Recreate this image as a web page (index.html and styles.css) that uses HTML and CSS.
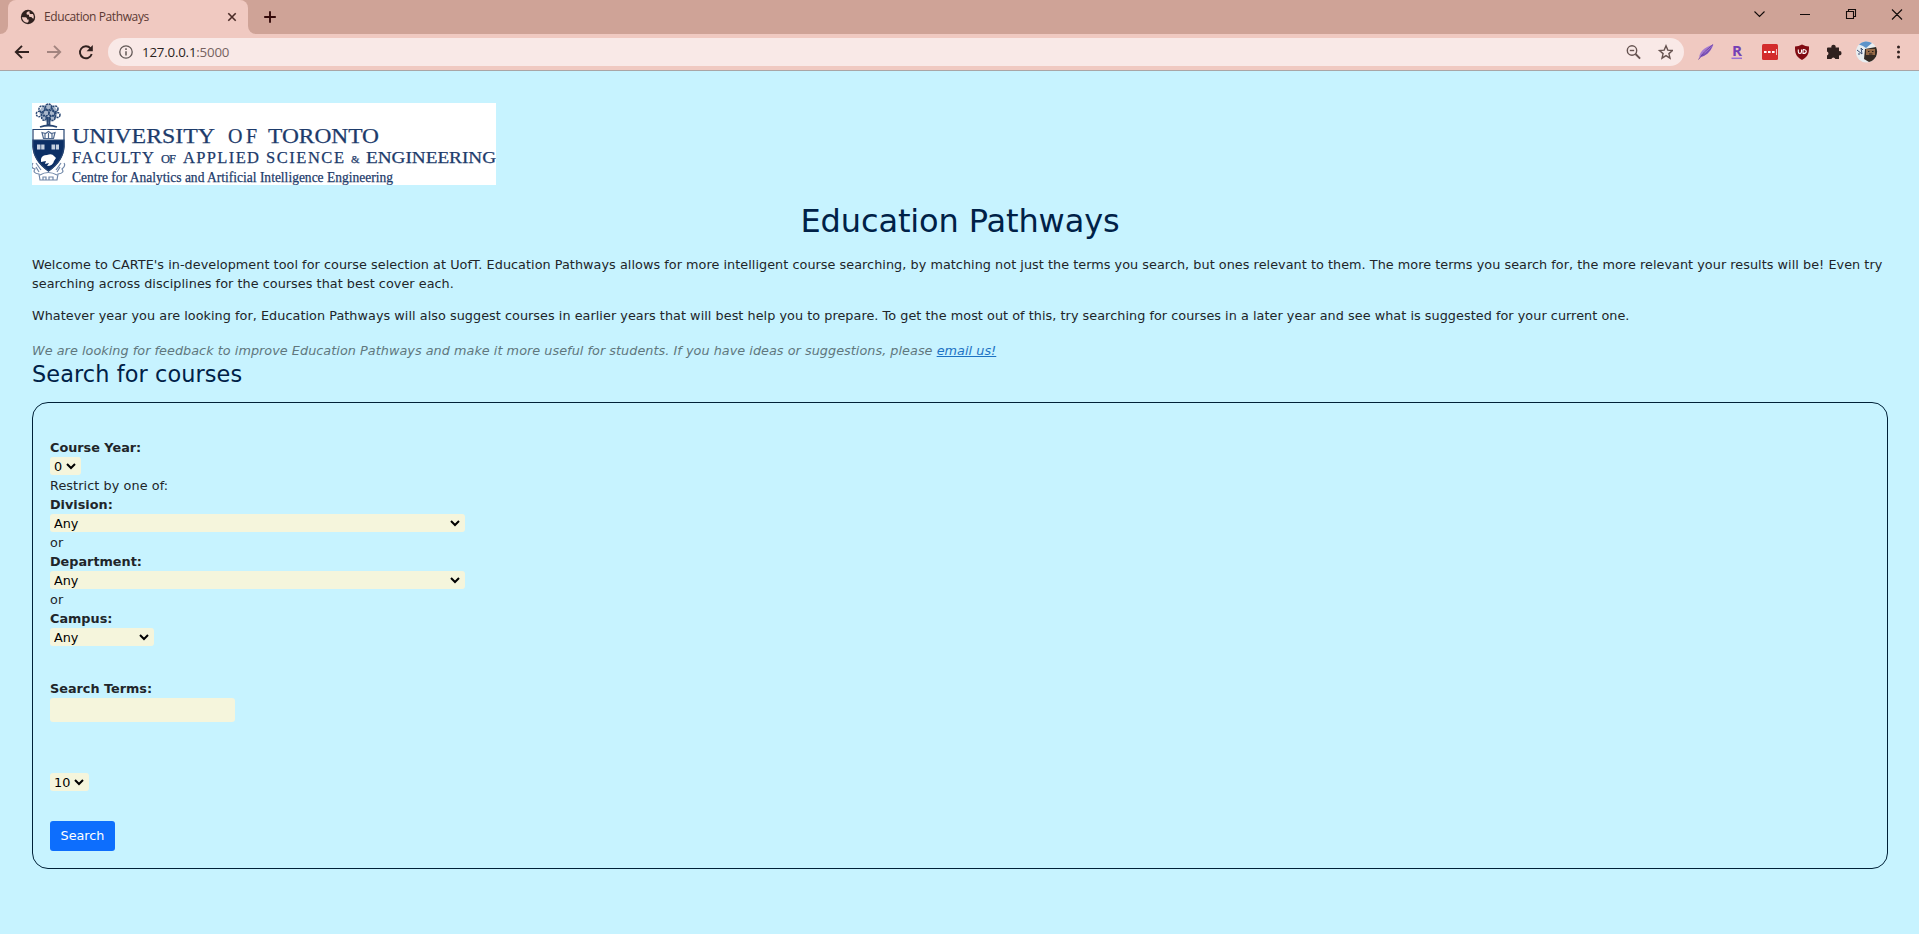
FILE: index.html
```html
<!DOCTYPE html>
<html lang="en">
<head>
<meta charset="utf-8">
<title>Education Pathways</title>
<link rel="stylesheet" href="styles.css">
</head>
<body>
<header class="browser">
  <div class="tabstrip">
    <div class="left-edge"></div>
    <div class="tab">
      <svg class="globe" width="16" height="16" viewBox="0 0 16 16"><circle cx="8" cy="8" r="7.200" fill="#30211f"/><path d="M1.800 8.200h3.700q1.600 0 1.600 1.500v.9h1.500v1.700q0 .9-1.200 1.400-4.600-.5-5.600-5.500zM9.500 2.300q-3 .2-3 2.200 0 1.300 1.500 1.300h1v1.300q0 1 1.300 1h1.200q.3 1.600 2.200 1.300.5-2.700-.8-4.500h-2.200q-1.200 0-1.200-1.200z" fill="#f0c9c1"/></svg>
      <span class="tab-title">Education Pathways</span>
      <svg class="close" width="10" height="10" viewBox="0 0 10 10"><path d="M1.300 1.300l7.400 7.400M8.700 1.300L1.300 8.700" stroke="#4a2b27" stroke-width="1.600"/></svg>
    </div>
    <div class="right-edge"></div>
    <svg class="plus" width="12" height="12" viewBox="0 0 12 12"><path d="M6 .2v11.600M.2 6h11.600" stroke="#340a0a" stroke-width="1.900"/></svg>
    <svg class="window-buttons" width="150" height="34" viewBox="0 0 150 34" fill="none" stroke="#130b0a" stroke-width="1.100"><path d="M4.500 11.500l5 5 5-5M50 14.500h10M96.500 11.500h7v7h-7zM98.500 11v-1.500h7v7H104M142 9.500l10 10M152 9.500l-10 10"/></svg>
  </div>
  <div class="toolbar">
    <svg class="nav" width="94" height="36" viewBox="0 0 94 36" fill="none" stroke-width="1.900"><path d="M29 18H16.500M22 11.800L15.800 18l6.200 6.200" stroke="#30211f"/><path d="M47 18h12.500M54 11.800l6.200 6.200-6.200 6.200" stroke="#a2847f"/><path d="M90.500 14.300A6 6 0 1 0 91.700 20" stroke="#30211f"/><path d="M92.800 11v6.200h-6.200z" fill="#30211f"/></svg>
    <div class="address">
      <svg width="14" height="14" viewBox="0 0 14 14"><circle cx="7" cy="7" r="6.200" fill="none" stroke="#625856" stroke-width="1.300"/><path d="M7 6.200v4.300M7 3.200v1.700" stroke="#625856" stroke-width="1.500"/></svg>
      <span class="url">127.0.0.1<span class="port">:5000</span></span>
      <svg class="address-icons" width="50" height="28" viewBox="0 0 50 28" fill="none" stroke="#665350" stroke-width="1.400"><circle cx="9" cy="12.500" r="4.700"/><path d="M6.800 12.500h4.400"/><path d="M12.500 16l4.600 4.600" stroke-width="1.900"/><path d="M43 7.800l1.800 4.300 4.700.4-3.600 3.100 1.100 4.600-4-2.500-4 2.500 1.100-4.600-3.600-3.100 4.700-.4z"/></svg>
    </div>
    <svg class="extensions" width="234" height="36" viewBox="0 0 234 36">
      <path d="M14.500 24C13.500 19 19 13 28.500 10.500 26.500 17 21 22 15 23.500z" fill="#a57bd0"/><path d="M16 21q5-2 8.500-6l3-3.500q-1.500 5-5 8-3 2.500-6.500 3z" fill="#7950b4"/><path d="M13.500 25.500Q18 18 28 10.500" stroke="#6b41a1" stroke-width=".9" fill="none"/>
      <text class="letter-r" x="47" y="22" textLength="10" lengthAdjust="spacingAndGlyphs">R</text><path d="M46.500 24.300h10.500" stroke="#9b70d4" stroke-width="1.500"/>
      <rect x="77" y="10" width="16" height="16" rx="1.500" fill="#d32b2b"/><path d="M79 17h2.600v2H79zM83 17h2.600v2H83zM87 17h2.600v2H87zM91 15h.7v6H91z" fill="#fff"/>
      <path d="M117 10.500Q113.500 12.300 110 12.500C110 18 110 22 117 26 124 22 124 18 124 12.500Q120.500 12.300 117 10.500z" fill="#800b12"/><path d="M113.300 15.500v2.300q0 1.700 1.600 1.700t1.600-1.700v-2.300M118 15.500v4q3.300 0 3.300-2t-3.300-2" fill="none" stroke="#fff" stroke-width="1.100"/>
      <path d="M143 13.500h3.400a2.200 2.200 0 1 1 4.200 0h3.400v3.700a2.100 2.100 0 1 1 0 4.100V25h-3.700a2 2 0 0 0-3.900 0H142v-3.600a2.100 2.100 0 0 0 0-4v-3q0-.9 1-.9z" fill="#30211f"/>
      <g><circle cx="181.500" cy="18" r="10.600" fill="#e8edf0"/><path d="M174 10.500A10.600 10.600 0 0 1 187 9l-6 5-3-2z" fill="#5d93c9"/><path d="M180 15l11-2a10.600 10.600 0 0 1-7 15l-5-3z" fill="#332a23"/><path d="M181 15h9v6h-9z" fill="#966b48"/><path d="M183 17.500h1.500M187 17.500h1.500M184 20h3.500" stroke="#2a211d"/><path d="M172 16l5 4-1-6 2 2M173 20h2" fill="none" stroke="#394d71"/></g>
      <g fill="#30211f"><circle cx="213.500" cy="13" r="1.500"/><circle cx="213.500" cy="18" r="1.500"/><circle cx="213.500" cy="23" r="1.500"/></g>
    </svg>
  </div>
</header>
<main class="page">
  <svg class="logo" width="464" height="82" viewBox="0 0 464 82">
    <rect width="464" height="82" fill="#fff"/>
    <g fill="none" stroke="#274673" stroke-width="1.200">
      <circle cx="16.500" cy="10" r="9" fill="#a9b7cb" stroke="none"/>
      <g stroke-width="1.500" stroke-dasharray="2 .8"><circle cx="16.500" cy="4" r="3"/><circle cx="10" cy="6" r="3"/><circle cx="23" cy="6" r="3"/><circle cx="7" cy="11" r="2.700"/><circle cx="14" cy="10" r="3"/><circle cx="20" cy="10" r="3"/><circle cx="25.500" cy="12" r="2.500"/><circle cx="12" cy="15" r="2.300"/><circle cx="20.500" cy="15" r="2.500"/></g>
      <path d="M15.500 14v8M17.500 14v8M8 24q8.500-3 17 0" stroke-width="1.800"/>
      <path d="M1 26.500h31v17Q31 58 16.500 68 2 58 1 43.500z" fill="#fff"/>
      <path d="M1 37h31v7Q31 58 16.500 68 2 58 1 44z" fill="#0c2f65"/>
      <path d="M11.500 35.500h10l1.500-6-3.500 1-3-2-3 2-3.500-1zM13 31v4M16.500 30v5M20 31v4" stroke="#50698e"/>
      <path d="M5 41.500h3.500v5H5zM9.200 41.500h3.300v5H9.200zM19.500 41.500H23v5h-3.500zM23.800 41.500H27v5h-3.200z" fill="#c5d0df" stroke="none"/>
      <path d="M9 56q1-4 6-4 5-2 7 1l2 2-2 3q-1 5-7 5l2-3-4 1 1-3-5 1z" fill="#fff" stroke="none"/>
      <path d="M1 60q-3 5 2 6-3 4 4 5l1 6h17l1-6q7-1 4-5 4-3 2-6M4 60l5 7M29 60l-5 7M8 72q8-5 17 0M11 77v-3h3v3M17 77v-3h4v3M4 64l3 5M28 64l-3 5" stroke="#7188a9"/>
    </g>
    <g class="logo-text">
      <text x="40" y="40" font-size="20" textLength="143" lengthAdjust="spacingAndGlyphs">UNIVERSITY</text>
      <text x="196" y="40" font-size="20" textLength="29">OF</text>
      <text x="236" y="40" font-size="20" textLength="111" lengthAdjust="spacingAndGlyphs">TORONTO</text>
      <text x="40" y="59.500" font-size="16.500" textLength="82">FACULTY</text>
      <text x="129" y="59.500" font-size="12.500" textLength="15">OF</text>
      <text x="151" y="59.500" font-size="16.500" textLength="76">APPLIED</text>
      <text x="234" y="59.500" font-size="16.500" textLength="78">SCIENCE</text>
      <text x="319" y="59.500" font-size="11">&amp;</text>
      <text x="334" y="59.500" font-size="16.500" textLength="130" lengthAdjust="spacingAndGlyphs">ENGINEERING</text>
      <text x="40" y="78.500" font-size="14.500" textLength="321" lengthAdjust="spacingAndGlyphs">Centre for Analytics and Artificial Intelligence Engineering</text>
    </g>
  </svg>
  <h1 class="title">Education Pathways</h1>
  <p class="intro">Welcome to CARTE's in-development tool for course selection at UofT. Education Pathways allows for more intelligent course searching, by matching not just the terms you search, but ones relevant to them. The more terms you search for, the more relevant your results will be! Even try searching across disciplines for the courses that best cover each.</p>
  <p class="intro">Whatever year you are looking for, Education Pathways will also suggest courses in earlier years that will best help you to prepare. To get the most out of this, try searching for courses in a later year and see what is suggested for your current one.</p>
  <p class="feedback">We are looking for feedback to improve Education Pathways and make it more useful for students. If you have ideas or suggestions, please <a class="mail" href="#">email us!</a></p>
  <h2 class="subtitle">Search for courses</h2>
  <form class="search-form">
    <label class="name" for="year">Course Year:</label>
    <select class="pick year" id="year"><option>0</option></select>
    <span class="line">Restrict by one of:</span>
    <label class="name" for="division">Division:</label>
    <select class="pick wide" id="division"><option>Any</option></select>
    <span class="line">or</span>
    <label class="name" for="department">Department:</label>
    <select class="pick wide" id="department"><option>Any</option></select>
    <span class="line">or</span>
    <label class="name" for="campus">Campus:</label>
    <select class="pick campus" id="campus"><option>Any</option></select>
    <label class="name terms-name" for="terms">Search Terms:</label>
    <input class="terms" id="terms" type="text">
    <select class="pick count" aria-label="Number of results"><option>10</option></select>
    <button class="submit" type="button">Search</button>
  </form>
</main>
</body>
</html>
```
FILE: styles.css
```css
* { box-sizing: border-box; }
body {
  margin: 0;
  height: 934px;
  overflow: hidden;
  background: #c7f3ff;
  color: #212529;
  font: 12.8px/19.2px Verdana, "DejaVu Sans", sans-serif;
}
svg { display: block; flex: none; }

.browser {
  height: 71px;
  border-bottom: 1px solid #a9a5a6;
  background: #f0c9c1;
}
.tabstrip {
  display: flex;
  height: 34px;
  background: #cfa397;
}
.left-edge, .right-edge { width: 8px; background: #f0c9c1; }
.left-edge::before, .right-edge::before {
  content: "";
  display: block;
  height: 34px;
  background: #cfa397;
  border-radius: 0 0 8px 0;
}
.right-edge::before { border-radius: 0 0 0 8px; }
.tab {
  display: flex;
  align-items: center;
  width: 240px;
  padding: 0 11px 0 12px;
  background: #f0c9c1;
  border-radius: 8px 8px 0 0;
}
.tab-title {
  flex: 1;
  margin-left: 8px;
  color: #5c3a34;
  font: 12px/16px "Open Sans", sans-serif;
  letter-spacing: -0.4px;
}
.plus { margin: 11px 0 0 8px; }
.window-buttons { margin-left: auto; margin-right: 19px; overflow: visible; }

.toolbar { display: flex; align-items: center; height: 36px; }
.nav { margin-right: 14px; }
.address {
  display: flex;
  flex: 1;
  align-items: center;
  height: 28px;
  padding: 0 11px;
  border-radius: 14px;
  background: #f9e9e7;
}
.url {
  flex: 1;
  margin-left: 9px;
  color: #292321;
  font: 13.3px/20px "Open Sans", sans-serif;
  letter-spacing: -0.2px;
}
.port { color: #76625f; }
.extensions { margin-left: 1px; }
.letter-r { font: bold 14px "Open Sans", sans-serif; fill: #7540b5; }

.page { padding: 32px 31px 0 32px; }
.logo-text { font-family: "Liberation Serif", serif; fill: #1d3b6b; stroke: #1d3b6b; stroke-width: 0.25px; }
.title {
  margin: 17px 0 15px;
  color: #002147;
  font-size: 32px;
  font-weight: 400;
  line-height: 38px;
  letter-spacing: -0.12px;
  text-align: center;
}
.intro { margin: 0 0 12.800px; letter-spacing: 0.044px; }
.intro + .intro { margin-bottom: 16px; }
.feedback { margin: 0; color: #60777d; font-style: italic; letter-spacing: 0.04px; }
.mail { color: #1c72c4; }
.subtitle {
  margin: 0 0 14px;
  color: #002147;
  font-size: 22.4px;
  font-weight: 400;
  line-height: 27px;
  letter-spacing: 0.1px;
}
.search-form {
  display: flex;
  flex-direction: column;
  align-items: flex-start;
  height: 467px;
  padding: 35px 17px 0;
  border: 1px solid #002138;
  border-radius: 16px;
}
.name, .line { height: 19px; line-height: 19px; }
.line { letter-spacing: 0.08px; }
.name { font-weight: 700; }
.pick {
  height: 18px;
  margin-bottom: 1px;
  padding: 1px 0 0;
  border: 0 solid #f5f5dc;
  border-right-width: 2px;
  border-radius: 3px;
  background-color: #f5f5dc;
  color: #000;
  font: inherit;
  line-height: 17px;
}
.year { width: 31px; }
.wide { width: 415px; }
.campus { width: 104px; }
.count { width: 39px; margin: 51px 0 30px; }
.terms-name { margin-top: 32px; }
.terms {
  width: 185px;
  height: 24px;
  border: 0;
  border-radius: 3px;
  background: #f5f5dc;
  font: inherit;
}
.submit {
  width: 65px;
  height: 30px;
  padding: 0;
  border: 0;
  border-radius: 3px;
  background: #0d6efd;
  color: #fff;
  font: inherit;
}
```
